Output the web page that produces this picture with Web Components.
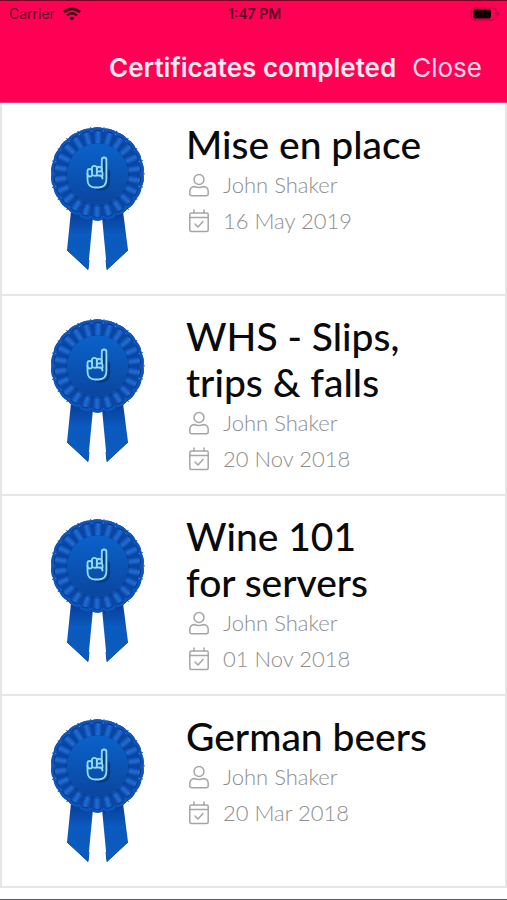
<!DOCTYPE html>
<html lang="en">
<head>
<meta charset="utf-8">
<meta name="viewport" content="width=device-width, initial-scale=1">
<title>Certificates completed</title>
<style>
    body {
        margin: 0;
        background: #fff;
        font-family: Lato, "Liberation Sans", sans-serif;
    }
</style>
</head>
<body>

<certificates-page>
    <status-bar slot="header" carrier="Carrier" time="1:47 PM"></status-bar>
    <nav-header slot="header">Certificates completed</nav-header>

    <certificate-card name="John Shaker" date="16 May 2019">Mise en place</certificate-card>
    <certificate-card name="John Shaker" date="20 Nov 2018">WHS - Slips,<br>trips &amp; falls</certificate-card>
    <certificate-card name="John Shaker" date="01 Nov 2018">Wine 101<br>for servers</certificate-card>
    <certificate-card name="John Shaker" date="20 Mar 2018">German beers</certificate-card>
</certificates-page>

<script>
// attaches an open shadow root filled with the given html
function render(el, html) {
    const template = document.createElement("template")
    template.innerHTML = html
    const shadow = el.attachShadow({mode: "open"})
    shadow.append(template.content.cloneNode(true))
    return shadow
}

class CertificatesPage extends HTMLElement
{
    constructor(){
        super();
        render(this, /*html*/`
            <style>
            :host {
                display: flex;
                flex-direction: column;
                box-sizing: border-box;
                min-height: 100vh;
                border-bottom: 1px solid #5c5c60;
            }

            header {
                background: #ff0055;
                border-top: 1px solid #7d0023;
                border-bottom: 1px solid #e0457a;
            }

            main {
                display: flex;
                flex-direction: column;
                padding-top: 1px;
                border: solid #e6e6e6;
                border-width: 0 2px;
            }
            </style>
            <header><slot name="header"></slot></header>
            <main><slot></slot></main>
        `)
    }
}

class StatusBar extends HTMLElement
{
    constructor(){
        super();
        this.shadow = render(this, /*html*/`
            <style>
            :host {
                display: grid;
                grid-template-columns: 1fr auto 1fr;
                align-items: center;
                height: 25px;
                padding: 0 7px 0 9px;
                color: #5a0726;
                font: 500 13px/24px Inter, "Liberation Sans", sans-serif;
            }

            .left {
                display: flex;
                align-items: center;
                gap: 8px;
            }

            #carrier {
                font-size: 14px;
                font-weight: 400;
            }

            #time {
                font-size: 14px;
                font-weight: 600;
            }

            .battery {
                justify-self: end;
            }

            svg {
                display: block;
            }
            </style>
            <div class="left">
                <span id="carrier"></span>
                <svg width="18" height="14" viewBox="0 0 18 14" fill="none" stroke="#3c0419" stroke-width="2.6">
                    <path d="M1 5.2C5.4.7 12.6.7 17 5.2"/>
                    <path d="M4 8.4c2.8-2.8 7.2-2.8 10 0"/>
                    <path d="M9 13.6 6.2 10.8c1.5-1.5 4.100-1.5 5.6 0z" fill="#3c0419" stroke="none"/>
                </svg>
            </div>
            <span id="time"></span>
            <svg class="battery" width="30" height="14" viewBox="0 0 30 14">
                <rect x="1" y="1" width="25" height="12" rx="3.5" fill="none" stroke="#a8043d"/>
                <rect x="3" y="2.500" width="18" height="9" rx="2" fill="#120008"/>
                <path d="M27.5 5v4q2-.5 2-2t-2-2z" fill="#a8043d"/>
            </svg>
        `)
    }

    connectedCallback()
    {
        this.shadow.querySelector("#carrier").textContent = this.getAttribute("carrier")
        this.shadow.querySelector("#time").textContent = this.getAttribute("time")
    }
}

class NavHeader extends HTMLElement
{
    constructor(){
        super();
        this.shadow = render(this, /*html*/`
            <style>
            :host {
                display: flex;
                justify-content: flex-end;
                align-items: center;
                gap: 16px;
                padding: 26px 25px 18px 16px;
                color: #ffe9f0;
                font: 400 26px/32px Inter, "Liberation Sans", sans-serif;
            }

            h1 {
                margin: 0;
                font: inherit;
                font-weight: 600;
                white-space: nowrap;
            }

            button {
                padding: 0;
                border: 0;
                background: none;
                color: #ffd9e5;
                font: inherit;
                cursor: pointer;
            }
            </style>
            <h1><slot></slot></h1>
            <button type="button">Close</button>
        `)

        this.shadow.querySelector("button").addEventListener("click", () => {
            this.dispatchEvent(new CustomEvent("close", {bubbles: true, composed: true}))
        })
    }
}

class RosetteBadge extends HTMLElement
{
    constructor(){
        super();
        // one fold of the frill, repeated around the centre
        const folds = 22
        let frill = ""
        for (let i = 0; i < folds; i++) {
            frill += `<use href="#fold" transform="rotate(${i * 360 / folds})"/>`
        }

        render(this, /*html*/`
            <style>
            :host {
                display: block;
            }

            svg {
                display: block;
            }
            </style>
            <svg width="94" height="144" viewBox="0 0 94 144" aria-hidden="true">
                <defs>
                    <linearGradient id="disc" x1="0" y1="0" x2="0" y2="1">
                        <stop offset="0" stop-color="#0a62cb"/>
                        <stop offset="1" stop-color="#0a469f"/>
                    </linearGradient>
                    <linearGradient id="tail" x1="0" y1="0" x2="0" y2="1">
                        <stop offset="0" stop-color="#083c96"/>
                        <stop offset=".4" stop-color="#0a5abf"/>
                        <stop offset="1" stop-color="#0a5cbd"/>
                    </linearGradient>
                    <linearGradient id="pleat" x1="0" y1="0" x2="1" y2="0">
                        <stop offset="0" stop-color="#0c4fb2"/>
                        <stop offset=".5" stop-color="#226cd2"/>
                        <stop offset="1" stop-color="#0d50b3"/>
                    </linearGradient>
                    <g id="fold">
                        <path d="M-4.5-29-6.300-45.500Q0-47.800 6.300-45.500L4.500-29z" fill="#0a47a4"/>
                        <path d="M-6.300-45.500Q0-47.800 6.300-45.500L5.500-42.500Q0-44-5.500-42.500z" fill="#0d55bc"/>
                        <path d="M-2.600-29-3-43Q.5-44 4-43L3-29z" fill="url(#pleat)"/>
                        <path d="M-3-43Q.5-44 4-43M6.500-46.800V-43.500" stroke="#073784" fill="none"/>
                    </g>
                </defs>
                <path d="M20 84 16 123 37 142.500 42 90z" fill="url(#tail)"/>
                <path d="M72 84 77 123 56 142.500 51 90z" fill="url(#tail)"/>
                <path d="M16 123 37 142.500 38 133M77 123 56 142.500 55 133" fill="none" stroke="#084b9f"/>
                <g transform="translate(46.500 47)">
                    <circle r="43" fill="#0a479f"/>
                    ${frill}
                    <circle r="32" fill="#073b8f" opacity=".5" cy="1"/>
                    <circle r="30.500" fill="url(#disc)"/>
                </g>
                <g fill="none" stroke-linejoin="round" stroke-linecap="round">
                    <path d="M58 44V54q0 8.500-8 8.500H46M52.500 45V35" stroke="#073a88" stroke-width="2.400"/>
                    <g stroke="#93dcf2" stroke-width="1.800">
                        <path d="M50.800 43.500V32.500q0-2 2.300-2t2.300 2V52q0 8.500-8 8.500H44.500q-8 0-8-8V44q0-2 2.200-2t2.300 2"/>
                        <path d="M36.500 47q0 2.500 2.300 2.500T41 47.500V41q0-2.200 2.400-2.200T45.800 41v6q0 1.800-1.800 1.800T41 47.500"/>
                        <path d="M45.800 42q.5-2.500 2.700-2.200t2.300 2.700q0 2-2.400 2H46"/>
                        <path d="M46 48.500h3q2.500.5 2.500 3M51 44.500q1 2 .5 4"/>
                    </g>
                </g>
            </svg>
        `)
    }
}

class CertificateCard extends HTMLElement
{
    constructor(){
        super();
        this.shadow = render(this, /*html*/`
            <style>
            :host {
                display: flex;
                align-items: flex-start;
                gap: 41px;
                padding: 0 16px 0 49px;
                border-bottom: 2px solid #e6e6e6;
            }

            rosette-badge {
                flex: none;
                padding: 23px 0;
            }

            .info {
                flex: 1;
                min-width: 0;
                padding: 17px 0;
            }

            h2 {
                margin: 0;
                color: #0a0a0a;
                font-weight: 500;
                font-size: 39px;
                line-height: 46px;
            }

            p {
                display: flex;
                align-items: center;
                gap: 13px;
                margin: 0;
                padding-left: 2px;
                color: #8e8e8e;
                font-weight: 300;
                font-size: 22px;
                line-height: 36px;
            }

            svg {
                flex: none;
                fill: none;
                stroke: #a6a6a6;
                stroke-width: 1.5;
                stroke-linejoin: round;
                stroke-linecap: round;
            }
            </style>
            <rosette-badge></rosette-badge>
            <div class="info">
                <h2><slot></slot></h2>
                <p>
                    <svg width="22" height="24" viewBox="0 0 22 24" aria-hidden="true">
                        <circle cx="11" cy="6.5" r="5"/>
                        <path d="M6.5 13.5q4.5 2 9 0 4.7.5 4.7 5v2.300q0 2-2 2H3.800q-2 0-2-2V18.500q0-4.500 4.700-5z"/>
                    </svg>
                    <span id="name"></span>
                </p>
                <p>
                    <svg width="22" height="24" viewBox="0 0 22 24" aria-hidden="true">
                        <rect x="1.8" y="4" width="18.4" height="18.5" rx="1.5"/>
                        <path d="M1.8 8.5h18.4M6 1v3M16 1v3M7 15l3 3 5-5.5"/>
                    </svg>
                    <time id="date"></time>
                </p>
            </div>
        `)
    }

    connectedCallback()
    {
        this.shadow.querySelector("#name").textContent = this.getAttribute("name")
        this.shadow.querySelector("#date").textContent = this.getAttribute("date")
    }
}

customElements.define("certificates-page", CertificatesPage);
customElements.define("status-bar", StatusBar);
customElements.define("nav-header", NavHeader);
customElements.define("rosette-badge", RosetteBadge);
customElements.define("certificate-card", CertificateCard);
</script>
</body>
</html>
